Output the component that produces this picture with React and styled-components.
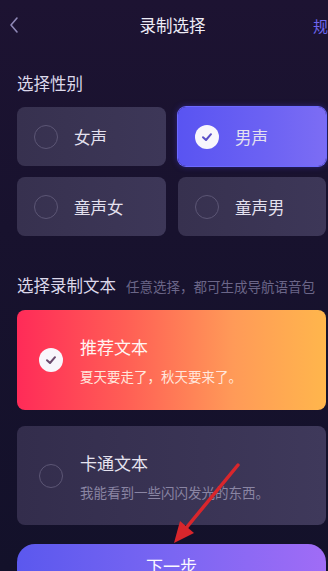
import styled, { createGlobalStyle } from "styled-components";

const GlobalStyle = createGlobalStyle`
  html, body {
    margin: 0;
    padding: 0;
    background: #17122d;
  }
  body {
    font-family: "Noto Sans CJK SC", "Noto Sans", sans-serif;
  }
`;

const Page = styled.div`
  position: relative;
  width: 328px;
  height: 571px;
  overflow: hidden;
  background: linear-gradient(180deg, #1d1332 0%, #18122e 40%, #13112a 100%);
  padding: 0 2px 0 17px;
  box-sizing: border-box;
  color: #ece9f5;
`;

const Header = styled.div`
  height: 50px;
  display: flex;
  align-items: center;
  justify-content: space-between;
  margin-left: -17px;
  margin-right: -2px;
  padding-left: 8px;
`;

const Back = styled.div`
  width: 20px;
  display: flex;
  align-items: center;
`;

const Title = styled.div`
  font-size: 16.5px;
  color: #eeecf6;
  padding-left: 4px;
`;

const RightLink = styled.div`
  font-size: 15px;
  color: #6e66ee;
  white-space: nowrap;
  width: 15px;
  overflow: hidden;
`;

const SectionLabel = styled.div`
  display: flex;
  align-items: baseline;
  gap: 10px;
  margin-top: ${(p) => p.$top}px;
  height: 22px;
  line-height: 22px;
  font-size: 16.5px;
  color: #dcd8ea;
`;

const Hint = styled.span`
  font-size: 13.5px;
  color: #6b6688;
  white-space: nowrap;
`;

const Grid = styled.div`
  display: grid;
  grid-template-columns: 149px 148px;
  grid-auto-rows: 59px;
  column-gap: 12px;
  row-gap: 11px;
  margin-top: 13px;
`;

const GenderCard = styled.div`
  display: flex;
  align-items: center;
  gap: 16px;
  padding-left: 17px;
  border-radius: 8px;
  font-size: 16.5px;
  color: #e4e1ef;
  background: ${(p) =>
    p.$active
      ? "linear-gradient(90deg, #5954f2 0%, #6c62f3 60%, #7c6df4 100%)"
      : "linear-gradient(90deg, #37314f 0%, #3d3758 100%)"};
  box-shadow: ${(p) =>
    p.$active ? "0 0 0 1px #6d69ff, 0 0 6px rgba(80,70,255,0.5)" : "none"};
`;

const Radio = styled.div`
  width: 24px;
  height: 24px;
  border-radius: 50%;
  box-sizing: border-box;
  border: 1.5px solid #5c5675;
  flex-shrink: 0;
`;

const Check = styled.div`
  width: 24px;
  height: 24px;
  border-radius: 50%;
  background: #f8f6fc;
  display: flex;
  align-items: center;
  justify-content: center;
  flex-shrink: 0;
`;

const TextList = styled.div`
  display: flex;
  flex-direction: column;
  gap: 16px;
  margin-top: 14px;
`;

const TextCard = styled.div`
  height: ${(p) => p.$h}px;
  display: flex;
  align-items: center;
  gap: 17px;
  padding-left: 22px;
  border-radius: 8px;
  background: ${(p) =>
    p.$active
      ? "linear-gradient(90deg, #ff2b58 0%, #ff5e55 35%, #ff9a58 70%, #ffb64c 100%)"
      : "linear-gradient(90deg, #332d4c 0%, #3a3455 60%, #3f395b 100%)"};
`;

const TextBody = styled.div`
  display: flex;
  flex-direction: column;
  gap: 9px;
`;

const CardTitle = styled.div`
  font-size: 17px;
  line-height: 23px;
  color: ${(p) => (p.$active ? "#fff5f2" : "#e6e3ef")};
`;

const CardSub = styled.div`
  font-size: 13.5px;
  line-height: 18px;
  color: ${(p) => (p.$active ? "#ffe6dc" : "#8a85a3")};
  white-space: nowrap;
`;

const NextButton = styled.div`
  margin-top: 19px;
  height: 50px;
  border-radius: 18px;
  background: linear-gradient(90deg, #5b58ee 0%, #7a66f2 50%, #a06cf6 100%);
  display: flex;
  justify-content: center;
  padding-top: 9px;
  box-sizing: border-box;
  font-size: 17px;
  color: #fbfaff;
`;

const Arrow = styled.svg`
  position: absolute;
  left: 160px;
  top: 455px;
  pointer-events: none;
`;

function CheckMark({ color }) {
  return (
    <Check>
      <svg width="14" height="14" viewBox="0 0 14 14">
        <path
          d="M3 7.2 L6 10 L11 4.2"
          fill="none"
          stroke={color}
          strokeWidth="2"
          strokeLinecap="round"
          strokeLinejoin="round"
        />
      </svg>
    </Check>
  );
}

const genders = [
  { label: "女声", active: false },
  { label: "男声", active: true },
  { label: "童声女", active: false },
  { label: "童声男", active: false },
];

export default function App() {
  return (
    <>
      <GlobalStyle />
      <Page>
        <Header>
          <Back>
            <svg width="12" height="18" viewBox="0 0 12 18">
              <path
                d="M9 2 L3 9 L9 16"
                fill="none"
                stroke="#8e88b6"
                strokeWidth="1.6"
                strokeLinecap="round"
                strokeLinejoin="round"
              />
            </svg>
          </Back>
          <Title>录制选择</Title>
          <RightLink>规则</RightLink>
        </Header>

        <SectionLabel $top={22}>选择性别</SectionLabel>
        <Grid>
          {genders.map((g) => (
            <GenderCard key={g.label} $active={g.active}>
              {g.active ? <CheckMark color="#5a4fc8" /> : <Radio />}
              {g.label}
            </GenderCard>
          ))}
        </Grid>

        <SectionLabel $top={38}>
          选择录制文本
          <Hint>任意选择，都可生成导航语音包</Hint>
        </SectionLabel>
        <TextList>
          <TextCard $active $h={100}>
            <CheckMark color="#6a4a6e" />
            <TextBody>
              <CardTitle $active>推荐文本</CardTitle>
              <CardSub $active>夏天要走了，秋天要来了。</CardSub>
            </TextBody>
          </TextCard>
          <TextCard $h={99}>
            <Radio />
            <TextBody>
              <CardTitle>卡通文本</CardTitle>
              <CardSub>我能看到一些闪闪发光的东西。</CardSub>
            </TextBody>
          </TextCard>
        </TextList>

        <NextButton>下一步</NextButton>

        <Arrow width="90" height="95" viewBox="0 0 90 95">
          <path
            d="M78 10 L22 78"
            stroke="#d8262c"
            strokeWidth="3.5"
            strokeLinecap="round"
          />
          <path d="M14 88 L20 66 L34 78 Z" fill="#d8262c" />
        </Arrow>
      </Page>
    </>
  );
}
